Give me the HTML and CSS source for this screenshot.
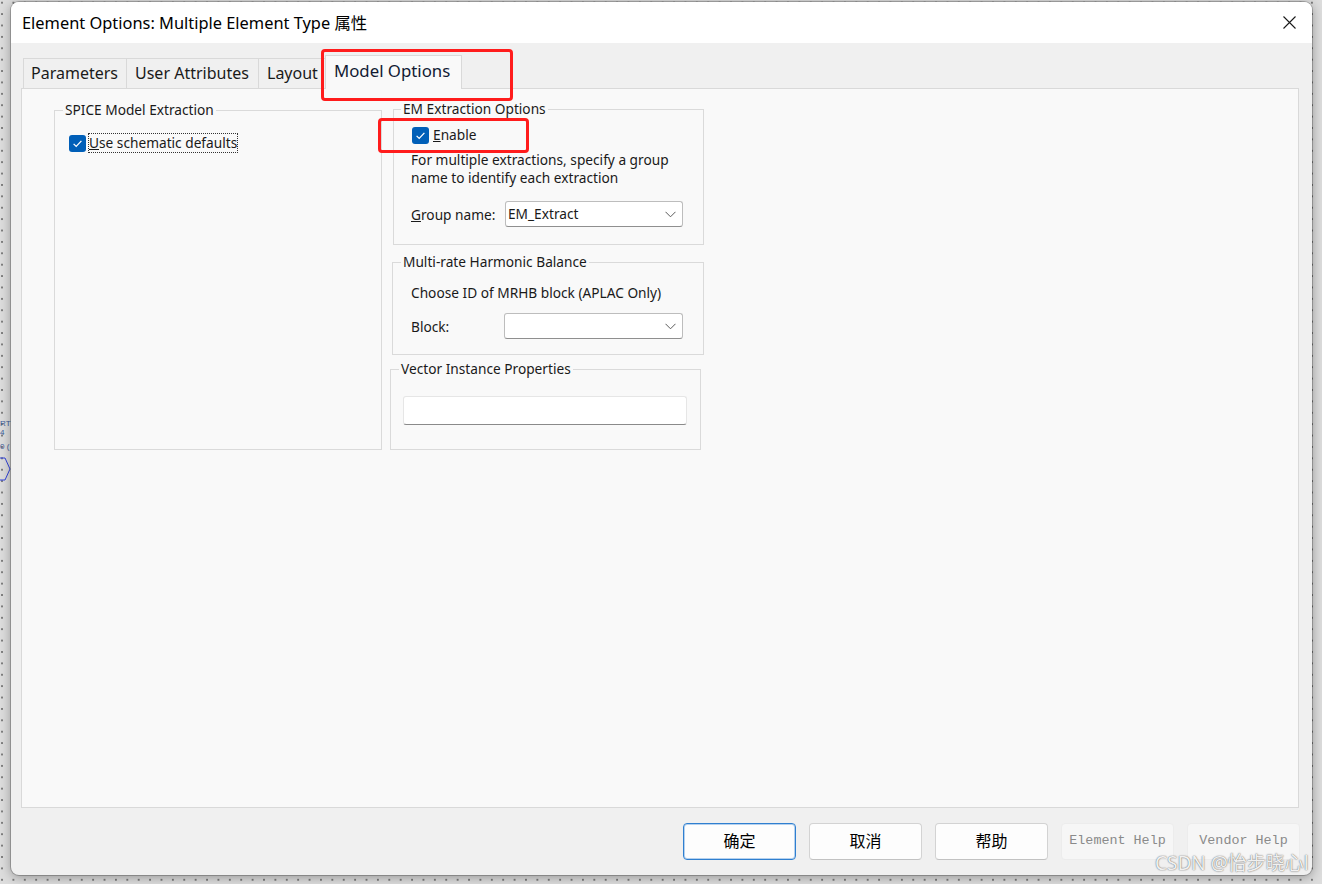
FILE: index.html
```html
<!DOCTYPE html>
<html lang="zh-CN">
<head>
<meta charset="utf-8">
<title>Element Options: Multiple Element Type 属性</title>
<link rel="stylesheet" href="styles.css">
</head>
<body>
<div class="canvas-marks">
  <span class="mark mark-rt">RT</span>
  <span class="mark mark-4">4</span>
  <span class="mark mark-0">0 (</span>
  <svg class="mark-hex" width="12" height="26" viewBox="0 0 12 26"><path d="M0 2 L5 2 L10 13 L5 24 L0 24" fill="none" stroke="#3344dd" stroke-width="1"/></svg>
</div>

<div class="window">
  <div class="titlebar">
    <span class="title">Element Options: Multiple Element Type 属性</span>
    <svg class="close" width="13" height="13" viewBox="0 0 13 13"><path d="M0.5 0.5 L12.5 12.5 M12.5 0.5 L0.5 12.5" stroke="#1a1a1a" stroke-width="1.1" fill="none"/></svg>
  </div>

  <div class="client">
    <div class="tabs">
      <div class="tab tab-params">Parameters</div>
      <div class="tab tab-user">User Attributes</div>
      <div class="tab tab-layout">Layout</div>
      <div class="tab active">Model Options</div>
    </div>

    <div class="panel">
      <fieldset class="group spice">
        <legend>SPICE Model Extraction</legend>
        <div class="check-row spice-row">
          <span class="checkbox"><svg width="17" height="17" viewBox="0 0 17 17"><path d="M4.6 8.9 L7.2 11.4 L12.4 5.9" fill="none" stroke="#ffffff" stroke-width="1.3"/></svg></span>
          <span class="focus-label"><u>U</u>se schematic defaults</span>
        </div>
      </fieldset>

      <div class="right-col">
        <fieldset class="group em">
          <legend>EM Extraction Options</legend>
          <div class="check-row em-row">
            <span class="checkbox"><svg width="17" height="17" viewBox="0 0 17 17"><path d="M4.6 8.9 L7.2 11.4 L12.4 5.9" fill="none" stroke="#ffffff" stroke-width="1.3"/></svg></span>
            <span class="check-label"><u>E</u>nable</span>
          </div>
          <p class="desc">For multiple extractions, specify a group<br>name to identify each extraction</p>
          <div class="field-row em-field">
            <span class="field-label em-label"><u>G</u>roup name:</span>
            <div class="combo em-combo">
              <span class="combo-text">EM_Extract</span>
              <svg class="chev" width="11" height="7" viewBox="0 0 11 7"><path d="M0.5 0.8 L5.5 5.8 L10.5 0.8" fill="none" stroke="#5a5a5a" stroke-width="1"/></svg>
            </div>
          </div>
        </fieldset>

        <fieldset class="group mrhb">
          <legend>Multi-rate Harmonic Balance</legend>
          <p class="mrhb-desc">Choose ID of MRHB block (APLAC Only)</p>
          <div class="field-row mrhb-field">
            <span class="field-label block-label">Block:</span>
            <div class="combo block-combo">
              <span class="combo-text"></span>
              <svg class="chev" width="11" height="7" viewBox="0 0 11 7"><path d="M0.5 0.8 L5.5 5.8 L10.5 0.8" fill="none" stroke="#5a5a5a" stroke-width="1"/></svg>
            </div>
          </div>
        </fieldset>

        <fieldset class="group vector">
          <legend>Vector Instance Properties</legend>
          <div class="textbox"></div>
        </fieldset>
      </div>
    </div>

    <div class="buttons">
      <div class="btn default">确定</div>
      <div class="btn">取消</div>
      <div class="btn">帮助</div>
      <div class="btn disabled">Element Help</div>
      <div class="btn disabled">Vendor Help</div>
    </div>
  </div>

  <div class="annot annot-tab"></div>
  <div class="annot annot-enable"></div>
</div>

<div class="watermark">CSDN @怡步晓心l</div>
</body>
</html>
```

FILE: styles.css
```css
html, body {
  margin: 0;
  padding: 0;
}

body {
  position: relative;
  width: 1322px;
  height: 884px;
  overflow: hidden;
  background-color: #dddddd;
  background-image: radial-gradient(circle at center, #7c7c7c 0, #7c7c7c 0.9px, transparent 1.3px);
  background-size: 11.4px 11.4px;
  background-position: -3.7px -3px;
  font-family: "Noto Sans", "Noto Sans CJK SC", sans-serif;
  color: #1a1a1a;
}

/* stray schematic marks on the canvas behind the dialog */
.canvas-marks .mark {
  position: absolute;
  left: 0;
  font-size: 8px;
  line-height: 9px;
  color: #3c5c9c;
  font-family: "Liberation Sans", sans-serif;
}
.mark-rt { top: 419px; }
.mark-4 { top: 428px; }
.mark-0 { top: 442px; }
.mark-hex {
  position: absolute;
  left: 0;
  top: 456px;
}

.window {
  position: relative;
  margin: 2px 0 0 11px;
  width: 1301px;
  height: 873px;
  border-radius: 8px;
  overflow: hidden;
  background: #f0f0f0;
  box-shadow: 0 0 0 1px rgba(0, 0, 0, 0.22), 0 2px 12px rgba(0, 0, 0, 0.35);
  display: flex;
  flex-direction: column;
}

.titlebar {
  flex: none;
  height: 41px;
  background: #ffffff;
  display: flex;
  align-items: center;
  justify-content: space-between;
  padding: 0 16px 0 11px;
}

.title {
  font-size: 16.4px;
  line-height: 20px;
  color: #000;
}

.close {
  display: block;
}

.client {
  flex: 1;
  display: flex;
  flex-direction: column;
}

/* tabs */
.tabs {
  flex: none;
  display: flex;
  align-items: flex-end;
  height: 34px;
  margin: 12px 0 -1px 12px;
  position: relative;
  z-index: 1;
}

.tab {
  flex: none;
  box-sizing: border-box;
  height: 30px;
  margin-bottom: 1px;
  padding: 0 0 0 8px;
  border: 1px solid #d9d9d9;
  border-bottom: none;
  margin-left: -1px;
  background: #f0f0f0;
  font-size: 16px;
  line-height: 29px;
  color: #1a1a1a;
  white-space: nowrap;
  overflow: hidden;
}

.tab-params {
  margin-left: 0;
  width: 104px;
  padding-left: 7px;
}

.tab-user {
  width: 133px;
}

.tab-layout {
  width: 68px;
}

.tab.active {
  height: 34px;
  margin-bottom: 0;
  margin-left: -1px;
  width: 137px;
  padding: 4px 0 0 8px;
  font-size: 16.8px;
  line-height: 22px;
  background: #f9f9f9;
  color: #111a33;
}

.panel {
  flex: none;
  box-sizing: border-box;
  height: 720px;
  margin: 0 13px 0 10px;
  border: 1px solid #d9d9d9;
  background: #f9f9f9;
  display: flex;
  align-items: flex-start;
  padding: 12px 0 0 32px;
}

/* group boxes */
.group {
  box-sizing: border-box;
  margin: 0;
  padding: 0 8px;
  border: 1px solid #dadada;
  min-inline-size: 0;
  font-size: 13.7px;
}

.group legend {
  padding: 0 2px;
  font-size: 13.7px;
  line-height: 18px;
  color: #1a1a1a;
}

.spice {
  width: 328px;
  height: 349px;
}

.right-col {
  width: 314px;
  margin-left: 8px;
  margin-top: -1px;
  display: flex;
  flex-direction: column;
}

.em {
  width: 311px;
  height: 145px;
  margin-left: 3px;
  padding-left: 7px;
}

.mrhb {
  width: 312px;
  height: 102px;
  margin-left: 2px;
  margin-top: 8px;
}

.vector {
  width: 311px;
  height: 90px;
  margin-top: 5px;
}

.check-row {
  display: flex;
  align-items: center;
  line-height: 18px;
}

.spice-row {
  margin: 14px 0 0 6px;
  height: 20px;
}

.em-row {
  margin: 8px 0 0 11px;
  height: 18px;
}

.checkbox {
  flex: none;
  width: 17px;
  height: 17px;
  border-radius: 3px;
  background: #005fb8;
  display: block;
}
.checkbox svg {
  display: block;
}

.focus-label {
  margin-left: 2px;
  border: 1px dotted #333;
  line-height: 18px;
  padding: 0;
  white-space: nowrap;
}

.check-label {
  margin-left: 4px;
  white-space: nowrap;
}

.desc {
  margin: 7px 0 0 10px;
  line-height: 18px;
  white-space: nowrap;
}

.field-row {
  display: flex;
  align-items: center;
  height: 26px;
}

.em-field {
  margin: 14px 0 0 10px;
}

.em-label {
  width: 94px;
  flex: none;
  white-space: nowrap;
}

.mrhb-desc {
  margin: 13px 0 0 10px;
  line-height: 18px;
  white-space: nowrap;
}

.mrhb-field {
  margin: 11px 0 0 10px;
}

.block-label {
  width: 93px;
  flex: none;
}

.combo {
  box-sizing: border-box;
  height: 26px;
  background: #ffffff;
  border: 1px solid #bdbdbd;
  border-bottom-color: #8f8f8f;
  border-radius: 3px;
  display: flex;
  align-items: center;
  justify-content: space-between;
  padding: 0 6px 0 2px;
}

.em-combo {
  width: 178px;
}

.block-combo {
  width: 179px;
}

.combo-text {
  line-height: 18px;
  color: #1a1a1a;
}

.chev {
  display: block;
}

.textbox {
  box-sizing: border-box;
  margin: 18px 0 0 4px;
  width: 284px;
  height: 29px;
  background: #ffffff;
  border: 1px solid #e6e6e6;
  border-bottom: 1px solid #8a8a8a;
  border-radius: 3px;
}

/* buttons */
.buttons {
  flex: none;
  display: flex;
  justify-content: flex-end;
  gap: 13px;
  margin-top: 15px;
  padding-right: 12px;
}

.btn {
  box-sizing: border-box;
  width: 113px;
  height: 37px;
  padding-bottom: 3px;
  border: 1px solid #d3d3d3;
  border-bottom-color: #c2c2c2;
  border-radius: 4px;
  background: #fdfdfd;
  display: flex;
  align-items: center;
  justify-content: center;
  font-family: "Noto Sans CJK SC", "Noto Sans", sans-serif;
  font-size: 16px;
  line-height: 20px;
  color: #000;
}

.btn.default {
  border: 1px solid #2f7fd0;
  box-shadow: inset 0 0 0 1px rgba(47, 127, 208, 0.35);
}

.btn.disabled {
  padding-bottom: 1px;
  background: #f6f6f6;
  border-color: #ececec;
  font-family: "Liberation Mono", monospace;
  font-size: 13.4px;
  color: #8a8a8a;
}

/* red annotation boxes drawn over the screenshot */
.annot {
  position: absolute;
  box-sizing: border-box;
  border: 3px solid #ff1c1c;
  border-radius: 4px;
  z-index: 5;
}

.annot-tab {
  left: 310px;
  top: 47px;
  width: 192px;
  height: 52px;
}

.annot-enable {
  left: 367px;
  top: 116px;
  width: 151px;
  height: 35px;
}

.watermark {
  position: absolute;
  left: 1155px;
  top: 851px;
  font-family: "Noto Sans", "Noto Sans CJK SC", sans-serif;
  font-size: 19px;
  line-height: 24px;
  color: rgba(255, 255, 255, 0.92);
  text-shadow: 0 0 1px rgba(0, 0, 0, 0.55), 0 0 2px rgba(0, 0, 0, 0.3);
  white-space: nowrap;
  z-index: 10;
}
```
